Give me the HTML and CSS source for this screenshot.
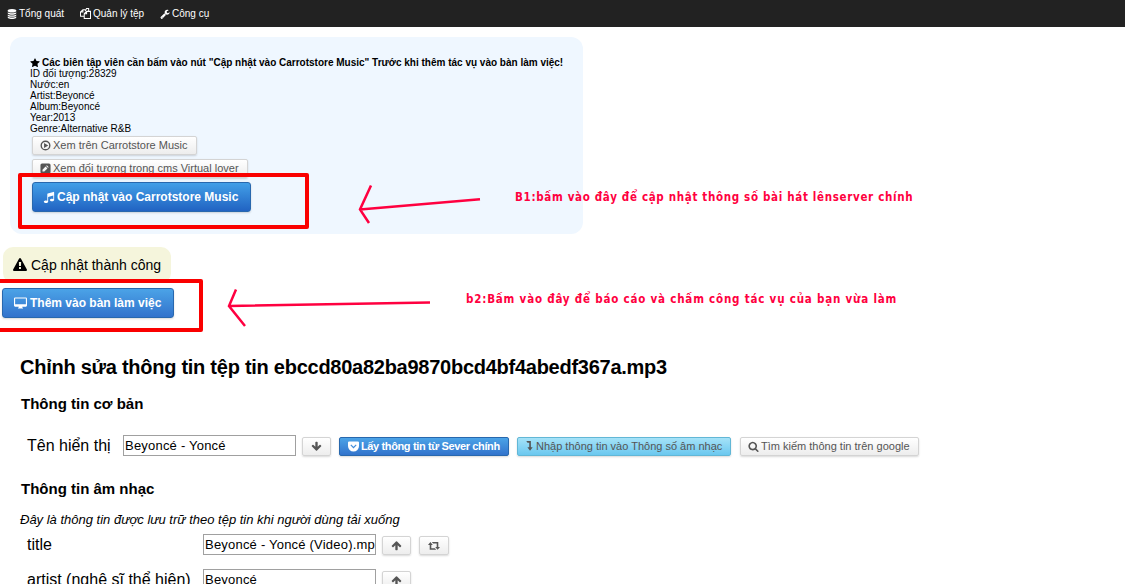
FILE: index.html
```html
<!DOCTYPE html>
<html lang="vi">
<head>
<meta charset="utf-8">
<title>Carrotstore Music</title>
<link rel="stylesheet" href="styles.css">
</head>
<body>
<svg class="defs" width="0" height="0">
  <symbol id="star" viewBox="0 0 1792 1792"><path d="M1728 647q0 22-26 48l-363 354 86 500q1 7 1 20 0 21-10.500 35.500t-30.500 14.500q-19 0-40-12l-449-236-449 236q-22 12-40 12-21 0-31.500-14.500t-10.500-35.500q0-6 2-20l86-500-364-354q-25-27-25-48 0-37 56-46l502-73 225-455q19-41 49-41t49 41l225 455 502 73q56 9 56 46z"/></symbol>
  <symbol id="database" viewBox="128 0 1536 1792"><path d="M896 768q237 0 443-43t325-127v170q0 69-103 128t-280 93.500-385 34.500-385-34.500-280-93.500-103-128v-170q119 84 325 127t443 43zM896 1536q237 0 443-43t325-127v170q0 69-103 128t-280 93.500-385 34.500-385-34.500-280-93.500-103-128v-170q119 84 325 127t443 43zM896 1152q237 0 443-43t325-127v170q0 69-103 128t-280 93.500-385 34.500-385-34.500-280-93.500-103-128v-170q119 84 325 127t443 43zM896 0q208 0 385 34.500t280 93.500 103 128v128q0 69-103 128t-280 93.500-385 34.500-385-34.500-280-93.500-103-128v-128q0-69 103-128t280-93.500 385-34.500z"/></symbol>
  <symbol id="files" viewBox="0 0 14 14"><path d="M4.800 10.500H.6V5.200L3.700 2.200h3M3.700 2.200v3H.6M5.400 7.300l3-3h5v9.100h-8zM8.400 4.300v3h-3M6.600 3.700L8.300.6h2.700v3.200" fill="none" stroke="currentColor" stroke-width="1.300"/></symbol>
  <symbol id="wrench" viewBox="0 0 1792 1792"><path d="M448 1472q0-26-19-45t-45-19-45 19-19 45 19 45 45 19 45-19 19-45zm644-420l-682 682q-37 37-90 37-52 0-91-37l-106-108q-38-36-38-90 0-53 38-91l681-681q39 98 114.500 173.500t173.500 114.500zm634-435q0 39-23 106-47 134-164.500 217.500t-258.500 83.500q-185 0-316.500-131.500t-131.500-316.500 131.500-316.500 316.500-131.500q58 0 121.500 16.500t107.500 46.500q16 11 16 28t-16 28l-293 169v224l193 107q5-3 79-48.500t135.500-81 70.500-35.500q15 0 23.500 10t8.500 25z"/></symbol>
  <symbol id="play" viewBox="0 0 12 12"><circle cx="6" cy="6" r="4.700" fill="none" stroke="currentColor" stroke-width="1.500"/><path d="M4.400 3.200v5.600L9 6z"/></symbol>
  <symbol id="pencil" viewBox="0 0 12 12"><path fill-rule="evenodd" d="M2.200.5h7.600A1.700 1.700 0 0 1 11.500 2.200v7.600A1.700 1.700 0 0 1 9.800 11.500H2.200A1.700 1.700 0 0 1 .5 9.800V2.200A1.700 1.700 0 0 1 2.200.5zM2.700 7.300v2h2l3.400-3.400-2-2zM6.700 3.300l2 2 .8-.8-2-2z"/></symbol>
  <symbol id="music" viewBox="0 0 1792 1792"><path d="M1664 224v1120q0 50-34 89t-86 60.500-103.500 32-96.500 10.500-96.500-10.500-103.500-32-86-60.500-34-89 34-89 86-60.500 103.500-32 96.500-10.500q105 0 192 39v-537l-768 237v709q0 50-34 89t-86 60.500-103.500 32-96.500 10.500-96.500-10.500-103.500-32-86-60.500-34-89 34-89 86-60.500 103.500-32 96.500-10.500q105 0 192 39v-967q0-31 19-56.500t49-35.500l832-256q12-4 28-4 40 0 68 28t28 68z"/></symbol>
  <symbol id="warning" viewBox="0 0 1792 1792"><path d="M1024 1375v-190q0-14-9.500-23.500t-22.500-9.500h-192q-13 0-22.500 9.500t-9.500 23.500v190q0 14 9.500 23.500t22.500 9.500h192q13 0 22.500-9.500t9.500-23.500zm-2-374l18-459q0-12-10-19-13-11-24-11h-220q-11 0-24 11-10 7-10 21l17 457q0 10 10 16.500t24 6.500h185q14 0 23.500-6.500t10.500-16.500zm-14-934l768 1408q35 63-2 126-17 29-46.500 46t-63.500 17h-1536q-34 0-63.500-17t-46.500-46q-37-63-2-126l768-1408q17-31 47-49t65-18 65 18 47 49z"/></symbol>
  <symbol id="desktop" viewBox="0 0 14 12"><path fill-rule="evenodd" d="M1.200 0h11.600Q14 0 14 1.200v7.600q0 1.200-1.200 1.200H8.800l.4 1.200q.6.100.6.800H4.200q0-.7.600-.8l.4-1.200h-4Q0 10 0 8.800V1.200Q0 0 1.200 0zM1.200 1.200v6.200h11.600V1.200z"/></symbol>
  <symbol id="up" viewBox="0 0 1792 1792"><path d="M1675 971q0 51-37 90l-75 75q-38 38-91 38-54 0-90-38l-294-293v704q0 52-37.500 84.500t-90.500 32.500h-128q-53 0-90.500-32.500t-37.500-84.500v-704l-294 293q-36 38-90 38t-90-38l-75-75q-38-38-38-90 0-53 38-91l651-651q35-37 90-37 54 0 91 37l651 651q37 39 37 91z"/></symbol>
  <symbol id="pocket" viewBox="0 0 12 11"><path fill-rule="evenodd" d="M1.200 0h9.600Q12 0 12 1.200V5a6 6 0 0 1-12 0V1.200Q0 0 1.200 0zM2.600 4.200L6 7.600l3.400-3.400-.9-.9L6 5.700 3.500 3.300z"/></symbol>
  <symbol id="leveldown" viewBox="0 0 7 11"><path d="M0 0h5v7h2L4.100 10.800 1.200 7h2V1.800H1.300z"/></symbol>
  <symbol id="search" viewBox="0 0 1792 1792"><path d="M1216 832q0-185-131.500-316.500t-316.500-131.500-316.500 131.500-131.500 316.500 131.500 316.500 316.500 131.500 316.500-131.500 131.500-316.500zm512 832q0 52-38 90t-90 38q-54 0-90-38l-343-342q-179 124-399 124-143 0-273.500-55.500t-225-150-150-225-55.500-273.500 55.500-273.500 150-225 225-150 273.500-55.500 273.500 55.500 225 150 150 225 55.500 273.500q0 220-124 399l343 343q37 37 37 90z"/></symbol>
  <symbol id="retweet" viewBox="0 0 12 8"><path d="M2.400 0L4.800 2.900H3.300v3.300h3.600L8.200 7.800H1.700V2.900H0zM9.600 7.800L7.200 4.900h1.500V1.600H5.100L3.800 0h6.500v4.900H12z"/></symbol>
</svg>

<nav class="topbar">
  <a class="nav-item nav-general"><svg class="icon"><use href="#database"/></svg><span>Tổng quát</span></a>
  <a class="nav-item nav-files"><svg class="icon"><use href="#files"/></svg><span>Quản lý tệp</span></a>
  <a class="nav-item nav-tools"><svg class="icon"><use href="#wrench"/></svg><span>Công cụ</span></a>
</nav>

<section class="info">
  <p class="notice"><svg class="icon"><use href="#star"/></svg><span>Các biên tập viên cần bấm vào nút "Cập nhật vào Carrotstore Music" Trước khi thêm tác vụ vào bàn làm việc!</span></p>
  <p><span>ID đối tượng:28329</span></p>
  <p><span>Nước:en</span></p>
  <p><span>Artist:Beyoncé</span></p>
  <p><span>Album:Beyoncé</span></p>
  <p><span>Year:2013</span></p>
  <p><span>Genre:Alternative R&amp;B</span></p>
  <div class="info-actions">
    <a class="btn btn-view"><svg class="icon"><use href="#play"/></svg><span>Xem trên Carrotstore Music</span></a>
    <a class="btn btn-object"><svg class="icon"><use href="#pencil"/></svg><span>Xem đối tượng trong cms Virtual lover</span></a>
    <a class="btn primary large btn-update"><svg class="icon"><use href="#music"/></svg><span>Cập nhật vào Carrotstore Music</span></a>
  </div>
</section>

<div class="status"><svg class="icon"><use href="#warning"/></svg><span>Cập nhật thành công</span></div>
<a class="btn primary large btn-desk"><svg class="icon"><use href="#desktop"/></svg><span>Thêm vào bàn làm việc</span></a>

<main class="editor">
  <h1><span>Chỉnh sửa thông tin tệp tin ebccd80a82ba9870bcd4bf4abedf367a.mp3</span></h1>
  <h2 class="basic-title"><span>Thông tin cơ bản</span></h2>
  <div class="row name-row">
    <label><span>Tên hiển thị</span></label>
    <div class="field"><span>Beyoncé - Yoncé</span></div>
    <a class="btn square"><svg class="icon flip"><use href="#up"/></svg></a>
    <a class="btn primary btn-fetch"><svg class="icon"><use href="#pocket"/></svg><span>Lấy thông tin từ Sever chính</span></a>
    <a class="btn sky btn-import"><svg class="icon"><use href="#leveldown"/></svg><span>Nhập thông tin vào Thông số âm nhạc</span></a>
    <a class="btn btn-google"><svg class="icon"><use href="#search"/></svg><span>Tìm kiếm thông tin trên google</span></a>
  </div>
  <h2 class="music-title"><span>Thông tin âm nhạc</span></h2>
  <p class="hint"><span>Đây là thông tin được lưu trữ theo tệp tin khi người dùng tải xuống</span></p>
  <div class="row tag-row">
    <label><span>title</span></label>
    <div class="field"><span>Beyoncé - Yoncé (Video).mp</span></div>
    <a class="btn square"><svg class="icon"><use href="#up"/></svg></a>
    <a class="btn square swap"><svg class="icon"><use href="#retweet"/></svg></a>
  </div>
  <div class="row tag-row">
    <label><span>artist (nghệ sĩ thể hiện)</span></label>
    <div class="field"><span>Beyoncé</span></div>
    <a class="btn square"><svg class="icon"><use href="#up"/></svg></a>
  </div>
</main>

<div class="mark mark-update"></div>
<div class="mark mark-desk"></div>
<svg class="arrows" width="1125" height="584" fill="none" stroke="#ff0040" stroke-width="2.500">
  <path d="M480 199.300L360 209.500M371 185.500L360 209.500L369 223"/>
  <path d="M430 302.500L229 306M236 289.500L229 306L245 326"/>
</svg>
<div class="caption caption-one"><span>B1:bấm vào đây để cập nhật thông số bài hát lên</span><span class="server">server chính</span></div>
<div class="caption caption-two"><span>b2:Bấm vào đây để báo cáo và chấm công tác vụ của bạn vừa làm</span></div>
</body>
</html>
```

FILE: styles.css
```css
* { box-sizing: border-box; }
html, body { height: 584px; overflow: hidden; }
body { margin: 0; position: relative; background: #fff; color: #000; font-family: "Liberation Sans", Arial, sans-serif; font-size: 16px; white-space: nowrap; }
p, h1, h2 { margin: 0; }
.defs { position: absolute; }
.icon { width: 12px; height: 12px; fill: currentColor; flex: none; }

.topbar { height: 27px; background: #222; color: #fff; display: flex; align-items: center; padding-left: 7px; font-size: 10px; }
.nav-item { display: flex; align-items: center; gap: 2px; }
.nav-item .icon { width: 10px; height: 10px; }
.nav-general { width: 73px; }
.nav-files { width: 80px; }
.nav-files .icon { width: 11px; height: 11px; }

.info { width: 573px; height: 197px; margin: 10px 0 0 10px; padding: 20px; background: #eff7ff; border-radius: 12px; font-size: 10px; line-height: 11px; }
.info p { height: 11px; }
.notice { font-weight: bold; display: flex; align-items: center; gap: 2px; }
.notice .icon { width: 10px; height: 10px; }
.info-actions { display: flex; flex-direction: column; align-items: flex-start; padding: 2px 0 0 2px; gap: 4px; }

.btn { display: flex; align-items: center; height: 19px; border: 1px solid #d4d4d4; border-radius: 2px; background: linear-gradient(#fff, #ededed); box-shadow: 0 1px 2px rgba(0,0,0,.15); color: #555; font-size: 11px; line-height: 13px; padding-left: 7px; gap: 2px; flex: none; }
.btn .icon { width: 11px; height: 11px; }
.primary { color: #fff; font-weight: bold; border-color: #2868ae; background: linear-gradient(#4ba3e7, #3273cc); }
.sky { border-color: #62b7d6; background: linear-gradient(#a5e2f8, #6bc8ef); }
.large { height: 30px; border-radius: 3px; font-size: 12px; padding-left: 11px; }
.btn-view { width: 165px; }
.btn-object { width: 216px; }
.btn-update { width: 219px; padding-left: 10px; background: linear-gradient(#429fe7, #2163c2); }
.btn-update .icon { width: 12px; height: 12px; }
.btn-desk { width: 172px; margin: 5px 0 0 2px; gap: 3px; }
.btn-desk .icon { width: 13px; height: 12px; }

.status { width: 168px; height: 36px; margin: 13px 0 0 3px; padding-left: 10px; display: flex; align-items: center; gap: 4px; background: #f5f5dc; border-radius: 10px; font-size: 14px; }
.status .icon { width: 14px; height: 14px; }

.editor { padding: 38px 0 0 20px; }
h1 { font-size: 20px; line-height: 23px; letter-spacing: -.26px; }
h2 { font-size: 15px; line-height: 17px; padding-left: 1px; }
.basic-title { margin-top: 16px; }
.row { display: flex; align-items: center; padding-left: 7px; }
.row label { padding-top: 2px; }
.row .btn { margin-top: 2px; }
.name-row { margin-top: 22px; height: 22px; }
.name-row label { width: 96px; }
.field { width: 173px; height: 21px; border: 1px solid #a0a0a0; padding-left: 1px; margin-right: 6px; font-size: 13px; line-height: 19px; letter-spacing: .21px; overflow: hidden; }
.square { width: 29px; padding: 0; justify-content: center; margin-right: 8px; }
.square .icon { width: 11px; height: 11px; }
.swap { width: 30px; }
.swap .icon { width: 12px; height: 8px; }
.flip { transform: scaleY(-1); }
.btn-fetch { width: 170px; padding-left: 8px; margin-right: 8px; letter-spacing: -.37px; }
.btn-import { width: 214px; padding-left: 8px; margin-right: 9px; }
.btn-import .icon { width: 7px; height: 10px; }
.btn-import span { padding-left: 1px; }
.btn-google { width: 179px; }
.music-title { margin-top: 24px; }
.hint { font-size: 13px; font-style: italic; line-height: 15px; margin-top: 15px; }
.tag-row { height: 35px; }
.tag-row label { width: 176px; padding-top: 0; }

.mark { position: absolute; border: 4px solid #fa0000; border-radius: 2px; }
.mark-update { left: 18px; top: 173px; width: 291px; height: 56px; }
.mark-desk { left: -8px; top: 279px; width: 211px; height: 53px; }
.arrows { position: absolute; left: 0; top: 0; }
.caption { position: absolute; display: flex; color: #ff0040; font: bold 11.5px/15px "DejaVu Sans Condensed", "DejaVu Sans", sans-serif; }
.caption-one { left: 515px; top: 190px; letter-spacing: .67px; }
.caption-two { left: 466px; top: 292px; letter-spacing: .8px; }
```
